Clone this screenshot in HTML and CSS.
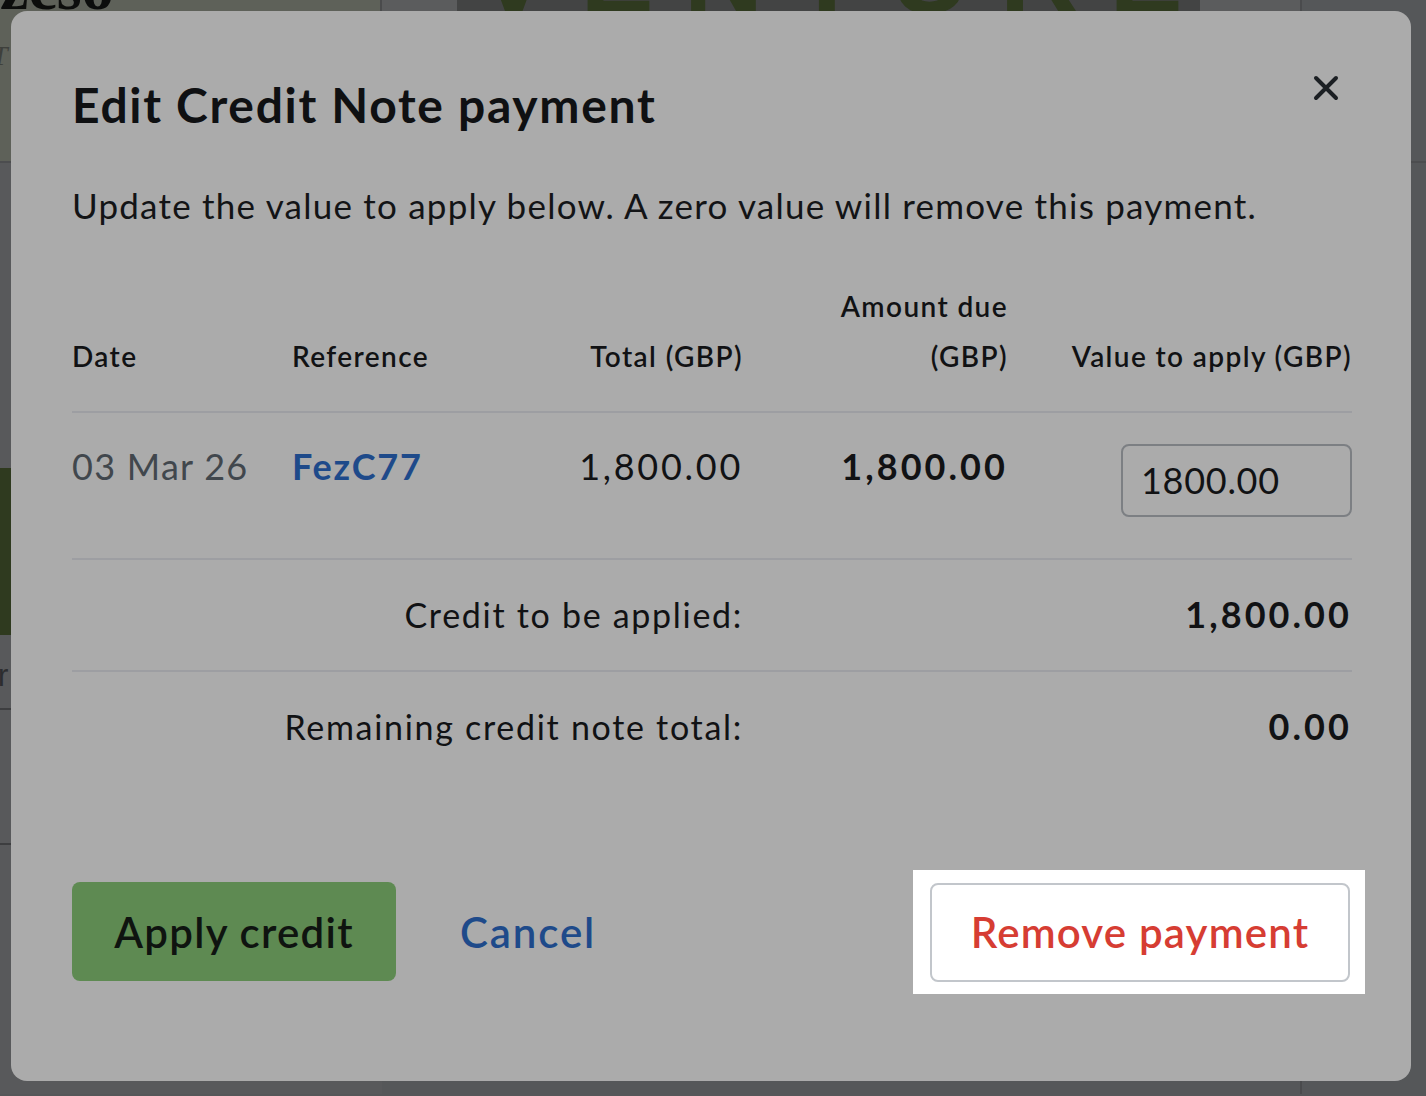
FILE: index.html
```html
<!DOCTYPE html>
<html lang="en">

<head>
    <meta charset="UTF-8">
    <meta name="viewport" content="width=device-width, initial-scale=1.0">
    <title>Edit Credit Note payment</title>
    <link rel="stylesheet" href="styles.css">
</head>

<body>
    <!-- page behind the dialog, already dimmed -->
    <div class="backdrop">
        <div class="bd-head">
            <div class="bd-brand">
                <span class="bd-logo">zcso</span>
                <i class="bd-tag">T</i>
            </div>
            <div class="bd-tab"></div>
            <div class="bd-banner"><span>VENTURE</span></div>
            <div class="bd-tab"></div>
            <div class="bd-rest"></div>
        </div>
        <div class="bd-body">
            <div class="bd-side">
                <div class="bd-side-top"></div>
                <div class="bd-promo"></div>
                <div class="bd-side-item">or</div>
                <div class="bd-side-item"></div>
            </div>
            <div class="bd-main"></div>
            <div class="bd-rest"></div>
        </div>
    </div>

    <div class="modal">
        <div class="modal-head">
            <h1>Edit Credit Note payment</h1>
            <button class="close" aria-label="Close">
                <svg width="26" height="26" viewBox="0 0 26 26">
                    <path d="M3 3L23 23M23 3L3 23" stroke="#1b1f23" stroke-width="4" stroke-linecap="round" />
                </svg>
            </button>
        </div>

        <p class="intro">Update the value to apply below. A zero value will remove this payment.</p>

        <div class="table-box">
            <table class="payments">
                <colgroup>
                    <col class="c-date">
                    <col class="c-ref">
                    <col class="c-total">
                    <col class="c-due">
                    <col class="c-apply">
                </colgroup>
                <thead>
                    <tr>
                        <th>Date</th>
                        <th>Reference</th>
                        <th class="num">Total (GBP)</th>
                        <th class="num">Amount due<br>(GBP)</th>
                        <th class="num">Value to apply (GBP)</th>
                    </tr>
                </thead>
                <tbody>
                    <tr class="item">
                        <td class="date">03 Mar 26</td>
                        <td><a href="#" class="ref">FezC77</a></td>
                        <td class="num figure">1,800.00</td>
                        <td class="num figure strong">1,800.00</td>
                        <td class="num"><input class="amount" type="text" value="1800.00"></td>
                    </tr>
                    <tr class="sum">
                        <td colspan="3" class="num">Credit to be applied:</td>
                        <td colspan="2" class="num figure strong">1,800.00</td>
                    </tr>
                    <tr class="sum last">
                        <td colspan="3" class="num">Remaining credit note total:</td>
                        <td colspan="2" class="num figure strong">0.00</td>
                    </tr>
                </tbody>
            </table>
        </div>

        <div class="modal-foot">
            <button class="btn btn-apply">Apply credit</button>
            <a href="#" class="btn-link">Cancel</a>
            <div class="highlight">
                <button class="btn btn-remove">Remove payment</button>
            </div>
        </div>
    </div>
</body>

</html>
```

FILE: styles.css
```css
* {
    box-sizing: border-box;
}

body {
    margin: 0;
    background: #555759;
    font-family: Lato, "Noto Sans", sans-serif;
    color: #111214;
    overflow: hidden;
}

/* Dimmed page behind */
.backdrop {
    height: 100vh;
}

.bd-head {
    display: grid;
    grid-template-columns: 382px 75px 743px 100px 1fr;
    height: 163px;
    border-bottom: 2px solid #4c4d4f;
}

.bd-brand {
    background: #5e6159;
    border-right: 2px solid #4a4b4c;
    overflow: hidden;
}

.bd-logo {
    display: block;
    margin-top: -44px;
    font-family: "Liberation Serif", serif;
    font-weight: bold;
    font-size: 64px;
    line-height: 1;
    color: #0c0d0c;
}

.bd-tag {
    display: block;
    margin: 20px 0 0 -8px;
    font-family: "Liberation Serif", serif;
    font-size: 28px;
    color: #3e403c;
}

.bd-tab {
    background: #5b5c5d;
}

.bd-banner {
    background: #434444;
    overflow: hidden;
}

.bd-banner span {
    display: block;
    margin-top: -80px;
    padding-left: 20px;
    font-family: "Liberation Sans", sans-serif;
    font-weight: bold;
    font-size: 110px;
    letter-spacing: 30px;
    line-height: 1;
    color: #2f3a1f;
}

.bd-rest {
    background: #555759;
    border-left: 2px solid #4a4b4d;
}

.bd-body {
    display: grid;
    grid-template-columns: 382px 918px 1fr;
    height: calc(100vh - 165px);
}

.bd-side {
    display: flex;
    flex-direction: column;
    background: #58595b;
}

.bd-side-top {
    height: 305px;
}

.bd-promo {
    height: 167px;
    background: #2f3a1f;
}

.bd-side-item {
    height: 75px;
    padding-top: 22px;
    font-family: "Liberation Sans", sans-serif;
    font-size: 32px;
    color: #2c2d2f;
    border-bottom: 2px solid #3d3e40;
    text-indent: -20px;
}

.bd-side-item:last-child {
    height: 135px;
}

.bd-main {
    background: #555759;
}

/* Dialog */
.modal {
    position: fixed;
    top: 11px;
    left: 11px;
    width: 1400px;
    height: 1070px;
    padding: 65px 60px 0 61px;
    background: #ababab;
    border-radius: 16px;
}

.modal-head {
    display: flex;
    justify-content: space-between;
    align-items: flex-start;
}

.modal-head h1 {
    margin: 0;
    font-size: 48px;
    line-height: 1.2;
    font-weight: bold;
    letter-spacing: 0.035em;
    color: #0f1012;
}

.close {
    margin: -1px 12px 0 0;
    padding: 0;
    border: none;
    background: transparent;
    line-height: 0;
    cursor: pointer;
}

.intro {
    margin: 50px 0 0;
    font-size: 35px;
    line-height: 1.2;
    letter-spacing: 0.035em;
    color: #131416;
}

.table-box {
    margin-top: 24px;
    padding-bottom: 26px;
    border-radius: 14px;
}

.payments {
    width: 1280px;
    table-layout: fixed;
    border-collapse: collapse;
}

.c-date { width: 220px; }
.c-ref { width: 200px; }
.c-total { width: 251px; }
.c-due { width: 265px; }
.c-apply { width: 344px; }

.payments th {
    padding: 31px 0 30px;
    font-size: 28px;
    line-height: 50px;
    font-weight: 600;
    letter-spacing: 0.05em;
    text-align: left;
    vertical-align: bottom;
    color: #111214;
    border-bottom: 2px solid #9d9ea2;
}

.payments td {
    padding: 0;
}

.payments .num {
    text-align: right;
}

.item td {
    padding: 32px 0 0;
    font-size: 36px;
    line-height: 43px;
    letter-spacing: 0.035em;
    vertical-align: top;
    border-bottom: 2px solid #9d9ea2;
}

.item td:last-child {
    padding: 31px 0 41px;
}

.date {
    color: #41474d;
}

.ref {
    color: #1e4a8a;
    font-weight: bold;
    letter-spacing: 0.05em;
    text-decoration: none;
}

.item td.figure {
    letter-spacing: 0.076em;
}

.strong {
    font-weight: bold;
}

.item td.figure.strong {
    letter-spacing: 0.085em;
}

.amount {
    display: block;
    width: 231px;
    height: 73px;
    margin-left: auto;
    padding: 0 18px;
    font-family: inherit;
    font-size: 36px;
    letter-spacing: 0.02em;
    color: #111214;
    background: transparent;
    border: 2px solid #7c7f83;
    border-radius: 8px;
}

.sum td {
    padding: 34px 0 35px;
    font-size: 34px;
    line-height: 40px;
    letter-spacing: 0.05em;
    vertical-align: baseline;
    border-bottom: 2px solid #9d9ea2;
}

.sum td.strong {
    font-size: 36px;
    letter-spacing: 0.085em;
}

.sum.last td {
    border-bottom: none;
}

/* Footer buttons */
.modal-foot {
    display: flex;
    align-items: center;
    margin-top: 62px;
    margin-right: -14px;
}

.btn {
    height: 99px;
    padding: 0;
    font-family: inherit;
    font-size: 42px;
    font-weight: 600;
    border-radius: 8px;
    cursor: pointer;
}

.btn-apply {
    width: 324px;
    background: #5e8a52;
    color: #0f1410;
    letter-spacing: 0.03em;
    border: none;
}

.btn-link {
    margin-left: 64px;
    font-size: 42px;
    font-weight: 600;
    letter-spacing: 0.045em;
    color: #1e4a8a;
    text-decoration: none;
}

.highlight {
    margin-left: auto;
    padding: 13px 15px 12px 17px;
    background: #ffffff;
}

.btn-remove {
    width: 420px;
    background: #ffffff;
    color: #d63d33;
    letter-spacing: 0.028em;
    border: 2px solid #c2c6cb;
}
```
